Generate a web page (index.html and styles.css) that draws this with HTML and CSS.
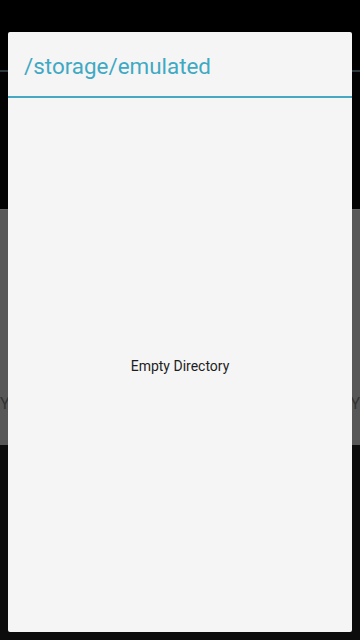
FILE: index.html
```html
<!DOCTYPE html>
<html>
<head>
<meta charset="utf-8">
<link rel="stylesheet" href="styles.css">
</head>
<body>
<div class="screen">
  <div class="bg-top"></div>
  <div class="bg-line"></div>
  <div class="bg-mid"></div>
  <div class="bg-band"><span class="ghost">Y</span><span class="ghost">Y</span></div>
  <div class="bg-bottom"></div>
</div>
<div class="dialog">
  <div class="dialog-title">/storage/emulated</div>
  <div class="dialog-divider"></div>
  <div class="dialog-body">Empty Directory</div>
</div>
</body>
</html>
```
FILE: styles.css
```css
html, body {
  margin: 0;
  padding: 0;
  width: 360px;
  height: 640px;
  overflow: hidden;
  background: #0c0c0c;
  font-family: Roboto, "Noto Sans", sans-serif;
}
.screen {
  display: flex;
  flex-direction: column;
  width: 360px;
  height: 640px;
}
.bg-top {
  height: 70px;
  background: #000;
}
.bg-line {
  height: 2px;
  background: #2c3a40;
}
.bg-mid {
  height: 137px;
  background: #030303;
}
.bg-band {
  height: 236px;
  background: #575757;
  border-top: 1px solid #666;
  display: flex;
  justify-content: space-between;
  align-items: flex-end;
  padding: 0 0 31px 0;
  box-sizing: border-box;
}
.ghost {
  color: #333;
  font-size: 16px;
  line-height: 20px;
}
.bg-bottom {
  flex: 1;
  background: #0c0c0c;
}
.dialog {
  position: absolute;
  left: 8px;
  top: 32px;
  width: 344px;
  height: 600px;
  background: #f5f5f5;
  border-radius: 2px;
  display: flex;
  flex-direction: column;
}
.dialog-title {
  height: 64px;
  box-sizing: border-box;
  padding: 20px 16px 0 16px;
  font-size: 22.4px;
  line-height: 28px;
  color: #3fa9c3;
}
.dialog-divider {
  height: 2px;
  background: #47a9c1;
}
.dialog-body {
  flex: 1;
  display: flex;
  align-items: center;
  justify-content: center;
  padding-top: 2px;
  font-size: 14px;
  color: #1e1e1e;
}
```
